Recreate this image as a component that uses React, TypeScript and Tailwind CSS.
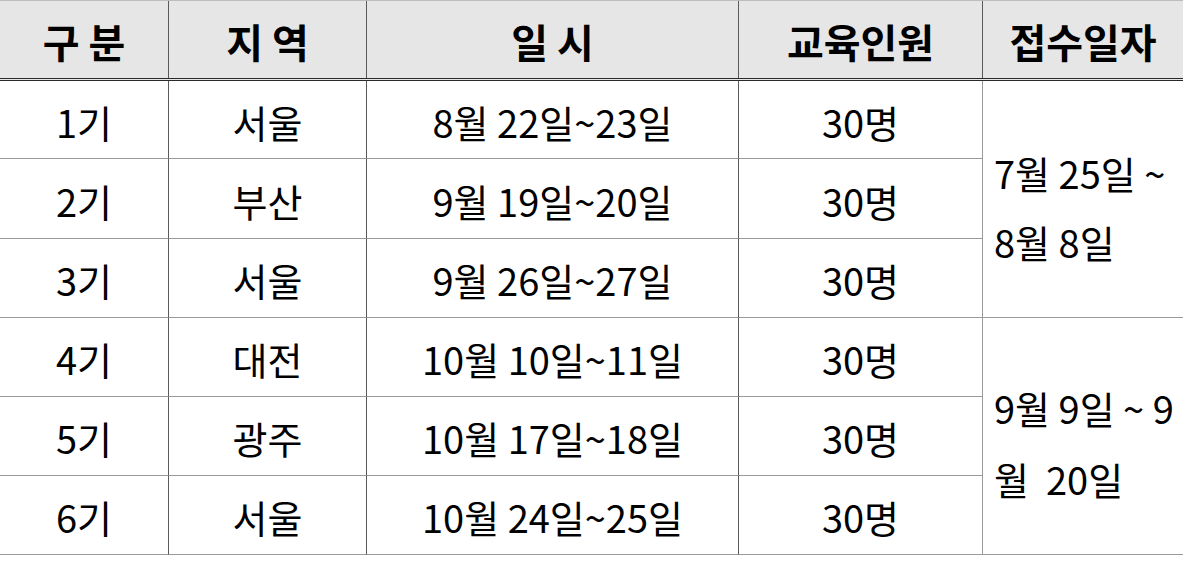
import React from "react";

const rows = [
  { g: "1기", r: "서울", d: "8월 22일~23일", n: "30명", h: "h-[78px]" },
  { g: "2기", r: "부산", d: "9월 19일~20일", n: "30명", h: "h-[80px]" },
  { g: "3기", r: "서울", d: "9월 26일~27일", n: "30명", h: "h-[79px]" },
  { g: "4기", r: "대전", d: "10월 10일~11일", n: "30명", h: "h-[79px]" },
  { g: "5기", r: "광주", d: "10월 17일~18일", n: "30명", h: "h-[79px]" },
  { g: "6기", r: "서울", d: "10월 24일~25일", n: "30명", h: "h-[79px]" },
];

const font = { fontFamily: '"Noto Sans CJK KR", "Noto Sans", sans-serif' };

export default function App() {
  const head = ["구 분", "지 역", "일 시", "교육인원", "접수일자"];
  return (
    <div className="w-[1186px] h-[565px] bg-white text-black" style={font}>
      <div className="w-[1183px]">
        {/* header */}
        <div className="grid grid-cols-[169px_198px_372px_244px_200px] h-[81px] bg-[#e6e6e6] border-t border-t-[#bdbdbd] border-b-[3px] border-double border-b-[#2a2a2a]">
          {head.map((t, i) => (
            <div
              key={i}
              className={`flex items-center justify-center pt-[2px] text-[40px] leading-none font-bold ${i < 4 ? "border-r border-r-[#5a5a5a]" : ""}`}
            >
              {t}
            </div>
          ))}
        </div>
        {/* body */}
        <div className="grid grid-cols-[169px_198px_372px_244px_200px]">
          {rows.map((row, i) => (
            <React.Fragment key={i}>
              <div className={`${row.h} flex items-center justify-center pt-[4px] text-[38px] leading-none border-r border-r-[#5a5a5a] border-b border-b-[#9a9a9a]`}>
                {row.g}
              </div>
              <div className={`${row.h} flex items-center justify-center pt-[4px] text-[38px] leading-none border-r border-r-[#5a5a5a] border-b border-b-[#9a9a9a]`}>
                {row.r}
              </div>
              <div className={`${row.h} flex items-center justify-center pt-[4px] text-[38px] leading-none border-r border-r-[#5a5a5a] border-b border-b-[#9a9a9a]`}>
                {row.d}
              </div>
              <div className={`${row.h} flex items-center justify-center pt-[4px] text-[38px] leading-none border-r border-r-[#9a9a9a] border-b border-b-[#9a9a9a]`}>
                {row.n}
              </div>
              {i === 0 && (
                <div className="row-span-3 flex flex-col justify-center pl-[11px] pt-[16px] text-[38px] leading-[69px] border-b border-b-[#9a9a9a]">
                  <span className="whitespace-pre">7월 25일 ~</span>
                  <span className="whitespace-pre">8월 8일</span>
                </div>
              )}
              {i === 3 && (
                <div className="row-span-3 flex flex-col justify-center pl-[11px] pt-[14px] text-[38px] leading-[71px] border-b border-b-[#9a9a9a]">
                  <span className="whitespace-pre">9월 9일 ~ 9</span>
                  <span className="whitespace-pre">월  20일</span>
                </div>
              )}
            </React.Fragment>
          ))}
        </div>
      </div>
    </div>
  );
}
